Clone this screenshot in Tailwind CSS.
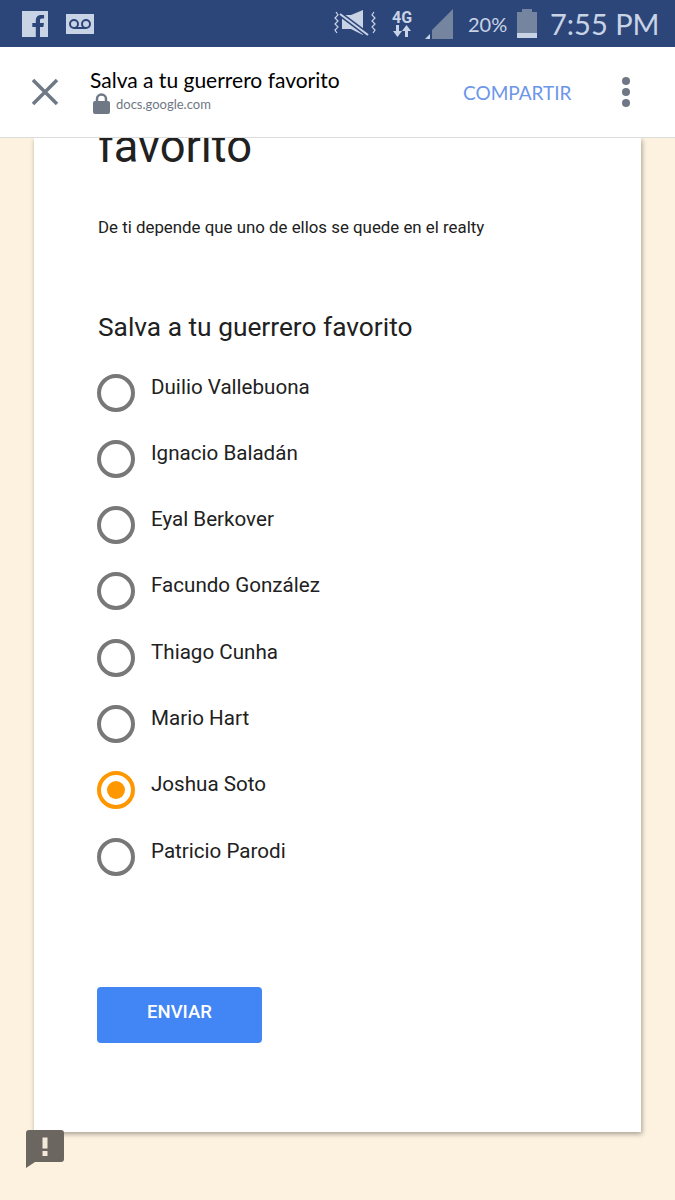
<!DOCTYPE html>
<html lang="es">
<head>
    <meta charset="UTF-8">
    <meta name="viewport" content="width=device-width, initial-scale=1.0">
    <title>Salva a tu guerrero favorito</title>
    <script src="https://cdn.jsdelivr.net/npm/@tailwindcss/browser@4"></script>
</head>
<body class="bg-[#fdf1df] font-['Roboto',sans-serif]">
    <div class="relative w-[675px] h-[1200px] overflow-hidden flex flex-col">
        <!-- Status bar -->
        <div class="h-[47px] shrink-0 bg-[#2d4679] flex items-center pl-[22px] text-[#c9d3e6]">
            <svg class="w-[26px] h-[26px]" viewBox="0 0 26 26"><path fill="#c9d3e6" d="M0 0h26v26H0z"/><path fill="#2d4679" d="M18 26V16h3.4l.5-4H18V9.600c0-1.200.4-2 2-2h2.100V4.100C21.700 4 20.500 4 19.200 4 16 4 13.800 5.900 13.800 9.300V12h-3.500v4h3.500v10z"/></svg>
            <svg class="w-[28px] h-[20px] ml-[18px]" viewBox="0 0 28 20"><path fill="#c9d3e6" d="M0 0h28v20H0z"/><g fill="none" stroke="#2d4679" stroke-width="2"><circle cx="8" cy="10" r="4"/><circle cx="20" cy="10" r="4"/><path d="M8 14h12"/></g></svg>
            <svg class="w-[44px] h-[28px] ml-[239px]" viewBox="0 0 44 28">
                <g fill="none" stroke="#c9d3e6" stroke-width="1.200"><path d="M3 2l2 3-3 3 3 3-3 3 3 3-3 3 2 3M41 2l-2 3 3 3-3 3 3 3-3 3 3 3-2 3"/></g>
                <path fill="#c9d3e6" d="M9 5h9l12-5v25L18 19H9z"/>
                <path stroke="#2d4679" stroke-width="5" d="M7 4l28 21"/>
                <path stroke="#c9d3e6" stroke-width="2" d="M7 4l28 21"/>
            </svg>
            <div class="w-[26px] ml-[12px] flex flex-col items-center leading-none">
                <span class="text-[16px] font-bold leading-[15px]">4G</span>
                <svg class="w-[18px] h-[12px]" viewBox="0 0 18 12"><path fill="#c9d3e6" d="M3 0h3v6h3l-4.500 6L0 6h3zM12 12h3V6h3l-4.500-6L9 6h3z"/></svg>
            </div>
            <svg class="w-[28px] h-[30px] ml-[10px]" viewBox="0 0 28 30"><path fill="#76859f" d="M7 30V21L28 0v30z"/><path fill="#c9d3e6" d="M0 30l5-5v5z"/></svg>
            <span class="ml-[15px] text-[20px] leading-none w-[42px] font-['Lato',sans-serif]">20%</span>
            <svg class="w-[20px] h-[29px] ml-[7px]" viewBox="0 0 20 29"><path fill="#76859f" d="M0 3h5V0h10v3h5v21H0z"/><path fill="#c9d3e6" d="M0 24h20v5H0z"/></svg>
            <span class="ml-[13px] text-[29px] leading-none whitespace-nowrap font-['Lato',sans-serif]">7:55 PM</span>
        </div>

        <!-- Top bar -->
        <div class="relative z-10 h-[91px] shrink-0 bg-white border-b border-[#dcdcdc] flex items-center">
            <svg class="w-[28px] h-[28px] ml-[31px]" viewBox="0 0 28 28"><path stroke="#6f7885" stroke-width="3.500" d="M2 2l24 24M26 2L2 26"/></svg>
            <div class="ml-[31px] w-[373px] pb-[2px]">
                <div class="text-[21px] leading-[24px] text-black font-['Lato',sans-serif]">Salva a tu guerrero favorito</div>
                <div class="flex items-center mt-[1px]">
                    <svg class="w-[17px] h-[21px] ml-[3px]" viewBox="0 0 17 21"><path fill="none" stroke="#6f7885" stroke-width="2.500" d="M4 9V6a4.500 4.500 0 0 1 9 0v3"/><rect y="8" width="17" height="13" rx="2" fill="#6f7885"/></svg>
                    <span class="ml-[6px] text-[13px] leading-[20px] text-[#6f7885] font-['Lato',sans-serif]">docs.google.com</span>
                </div>
            </div>
            <span class="w-[109px] text-[19px] leading-none whitespace-nowrap text-[#6b96ea] font-['Lato',sans-serif]">COMPARTIR</span>
            <div class="ml-[50px] flex flex-col gap-[3px]">
                <span class="block w-[8px] h-[8px] rounded-full bg-[#6f7885]"></span>
                <span class="block w-[8px] h-[8px] rounded-full bg-[#6f7885]"></span>
                <span class="block w-[8px] h-[8px] rounded-full bg-[#6f7885]"></span>
            </div>
        </div>

        <!-- Form card, scrolled under the top bar -->
        <div class="ml-[34px] w-[607px] h-[994px] shrink-0 bg-white shadow-[1px_2px_5px_rgba(0,0,0,0.35)] pl-[63px]">
            <h1 class="ml-px mt-[-17px] text-[45.300px] leading-[52px] text-[#212121]">favorito</h1>
            <p class="ml-px mt-[42px] text-[16.850px] leading-[24px] text-[#212121]">De ti depende que uno de ellos se quede en el realty</p>
            <h2 class="ml-px mt-[72px] text-[26.300px] leading-[32px] text-[#212121]">Salva a tu guerrero favorito</h2>
            <div class="mt-[30.500px] flex flex-col gap-[28.300px]">
                <div class="flex h-[38px]"><span class="w-[38px] h-[38px] rounded-full border-[4px] border-[#787878]"></span><span class="ml-[16px] text-[20.600px] leading-[26px] text-[#212121]">Duilio Vallebuona</span></div>
                <div class="flex h-[38px]"><span class="w-[38px] h-[38px] rounded-full border-[4px] border-[#787878]"></span><span class="ml-[16px] text-[20.600px] leading-[26px] text-[#212121]">Ignacio Baladán</span></div>
                <div class="flex h-[38px]"><span class="w-[38px] h-[38px] rounded-full border-[4px] border-[#787878]"></span><span class="ml-[16px] text-[20.600px] leading-[26px] text-[#212121]">Eyal Berkover</span></div>
                <div class="flex h-[38px]"><span class="w-[38px] h-[38px] rounded-full border-[4px] border-[#787878]"></span><span class="ml-[16px] text-[20.600px] leading-[26px] text-[#212121]">Facundo González</span></div>
                <div class="flex h-[38px]"><span class="w-[38px] h-[38px] rounded-full border-[4px] border-[#787878]"></span><span class="ml-[16px] text-[20.600px] leading-[26px] text-[#212121]">Thiago Cunha</span></div>
                <div class="flex h-[38px]"><span class="w-[38px] h-[38px] rounded-full border-[4px] border-[#787878]"></span><span class="ml-[16px] text-[20.600px] leading-[26px] text-[#212121]">Mario Hart</span></div>
                <div class="flex h-[38px]"><span class="w-[38px] h-[38px] rounded-full border-[4px] border-[#ff9800] flex items-center justify-center"><span class="block w-[18px] h-[18px] rounded-full bg-[#ff9800]"></span></span><span class="ml-[16px] text-[20.600px] leading-[26px] text-[#212121]">Joshua Soto</span></div>
                <div class="flex h-[38px]"><span class="w-[38px] h-[38px] rounded-full border-[4px] border-[#787878]"></span><span class="ml-[16px] text-[20.600px] leading-[26px] text-[#212121]">Patricio Parodi</span></div>
            </div>
            <button class="mt-[111.500px] w-[165px] h-[56px] rounded-[4px] bg-[#4285f4] text-white text-[18.500px] font-medium pb-[4px]">ENVIAR</button>
        </div>

        <!-- Report abuse badge -->
        <svg class="absolute left-[26px] top-[1130px] w-[38px] h-[38px]" viewBox="0 0 38 38"><path fill="#6b665f" d="M3 0h32a3 3 0 0 1 3 3v26a3 3 0 0 1-3 3H9l-9 6V3a3 3 0 0 1 3-3z"/><path fill="#f3ead9" d="M16.500 7.500h5v11h-5zM16.500 21h5v5h-5z"/></svg>
    </div>
</body>
</html>
